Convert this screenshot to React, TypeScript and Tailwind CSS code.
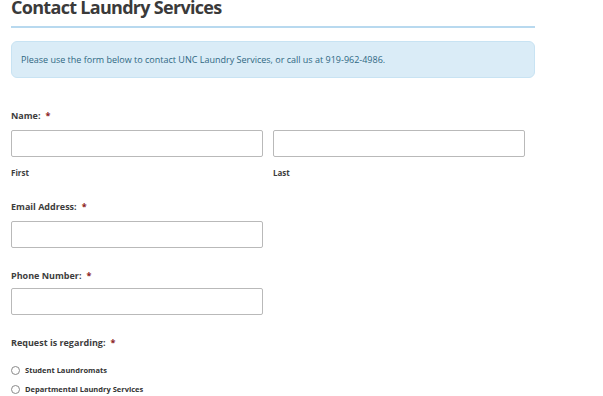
export default function App() {
  const font = { fontFamily: '"Open Sans", "Liberation Sans", sans-serif' };

  const Label = ({ text }: { text: string }) => (
    <div className="text-[9px] font-bold text-[#3d3d3d] leading-none">
      {text}
      <span className="text-[#8b1c1c] ml-[5px]">*</span>
    </div>
  );

  const Input = () => (
    <input type="text" className="block w-[252px] h-[27px] border border-[#b9b9b9] rounded-[2px] bg-white" />
  );

  return (
    <div className="w-[603px] h-[396px] overflow-hidden bg-white px-[11px]" style={font}>
      <h1 className="text-[18px] font-bold text-[#3a3a3a] leading-none -mt-[2px] tracking-[-0.7px]">
        Contact Laundry Services
      </h1>
      <div className="w-[524px] h-[2px] bg-[#b8d9ef] mt-[10px]" />
      <div className="w-[524px] h-[37px] mt-[13px] bg-[#daecf7] border border-[#c8e3f3] rounded-[6px] flex items-center px-[9px]">
        <p className="text-[9px] font-medium text-[#2f6883] leading-none">
          Please use the form below to contact UNC Laundry Services, or call us at 919-962-4986.
        </p>
      </div>

      <div className="mt-[33px]">
        <Label text="Name:" />
        <div className="flex gap-[10px] mt-[10px]">
          <div>
            <Input />
            <div className="text-[8px] font-bold text-[#3d3d3d] mt-[12px] leading-none">First</div>
          </div>
          <div>
            <Input />
            <div className="text-[8px] font-bold text-[#3d3d3d] mt-[12px] leading-none">Last</div>
          </div>
        </div>
      </div>

      <div className="mt-[25px]">
        <Label text="Email Address:" />
        <div className="mt-[10px]">
          <Input />
        </div>
      </div>

      <div className="mt-[23px]">
        <Label text="Phone Number:" />
        <div className="mt-[8px]">
          <Input />
        </div>
      </div>

      <div className="mt-[23px]">
        <Label text="Request is regarding:" />
        <div className="mt-[19px] flex flex-col gap-[10px]">
          {["Student Laundromats", "Departmental Laundry Services"].map((t) => (
            <label key={t} className="flex items-center gap-[5px] text-[7.5px] font-bold text-[#333] leading-none">
              <span className="w-[9px] h-[9px] rounded-full border border-[#8a8a8a] bg-white" />
              {t}
            </label>
          ))}
        </div>
      </div>
    </div>
  );
}
